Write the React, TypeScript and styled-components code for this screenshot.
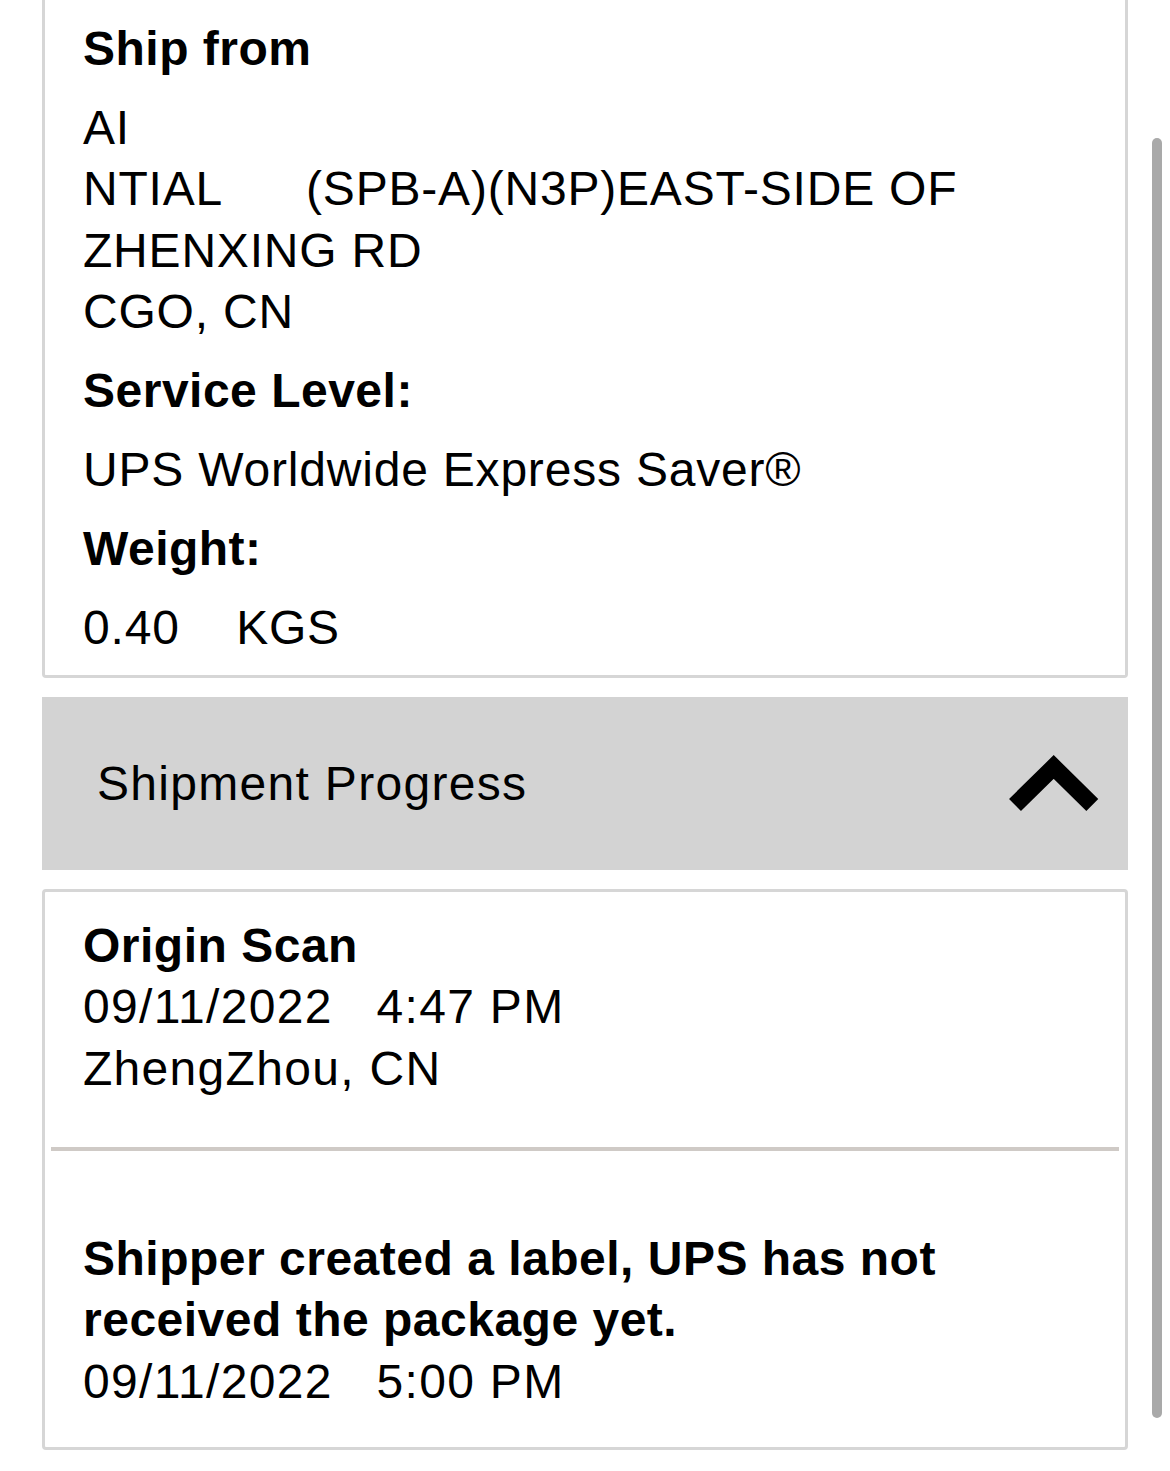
import styled, { createGlobalStyle } from "styled-components";

const GlobalStyle = createGlobalStyle`
  html, body {
    margin: 0;
    padding: 0;
    background: #ffffff;
    height: 1471px;
    overflow: hidden;
  }
  body {
    font-family: "Liberation Sans", Arial, Helvetica, sans-serif;
    color: #000;
  }
`;

const Page = styled.div`
  position: relative;
  width: 1086px;
  padding: 0 42px 21px 42px;
`;

const Card = styled.section<{ $open?: boolean }>`
  border: 3px solid #d6d6d6;
  border-top: ${(p) => (p.$open ? "none" : "3px solid #d6d6d6")};
  border-radius: ${(p) => (p.$open ? "0 0 4px 4px" : "4px")};
  background: #fff;
`;

const Details = styled.div`
  display: flex;
  flex-direction: column;
  gap: 17.5px;
  padding: 17.6px 38px 16.5px 38px;
`;

const Label = styled.div`
  font-size: 48px;
  font-weight: 700;
  line-height: 61.5px;
  letter-spacing: 0.5px;
`;

const Value = styled.div`
  font-size: 48px;
  font-weight: 400;
  line-height: 61.5px;
  letter-spacing: 0.8px;
  white-space: pre;
`;

const SectionHeader = styled.button`
  display: flex;
  align-items: center;
  justify-content: space-between;
  width: 100%;
  height: 173px;
  margin-top: 19px;
  padding: 0 26px 0 55px;
  border: none;
  background: #d3d3d3;
  font-family: inherit;
  font-size: 48px;
  letter-spacing: 1.3px;
  color: #000;
  cursor: pointer;
  box-sizing: border-box;
`;

const ProgressCard = styled(Card)`
  margin-top: 19px;
`;

const Event = styled.div<{ $first?: boolean }>`
  margin: 0 6px;
  padding: ${(p) => (p.$first ? "22.6px 30px 48px 32px" : "76.6px 30px 35px 32px")};
  border-bottom: ${(p) => (p.$first ? "4px solid #cfcac6" : "none")};
`;

const EventTitle = styled(Label)``;

const EventLine = styled(Value)`
  letter-spacing: 1.3px;
`;

const ScrollThumb = styled.div`
  position: absolute;
  top: 138px;
  left: 1152px;
  width: 10px;
  height: 1280px;
  border-radius: 5px;
  background: #a9a9a9;
`;

function ChevronUp() {
  return (
    <svg width="96" height="60" viewBox="0 0 96 60" aria-hidden="true">
      <polyline
        points="9,51 47.7,13 86.3,51"
        fill="none"
        stroke="#000"
        strokeWidth="17"
        strokeLinecap="butt"
        strokeLinejoin="miter"
      />
    </svg>
  );
}

export default function App() {
  return (
    <>
      <GlobalStyle />
      <Page>
        <Card $open>
          <Details>
            <Label>Ship from</Label>
            <Value>
              {"AI\nNTIAL      (SPB-A)(N3P)EAST-SIDE OF\nZHENXING RD\nCGO, CN"}
            </Value>
            <Label>Service Level:</Label>
            <Value>UPS Worldwide Express Saver®</Value>
            <Label>Weight:</Label>
            <Value>{"0.40    KGS"}</Value>
          </Details>
        </Card>

        <SectionHeader>
          <span>Shipment Progress</span>
          <ChevronUp />
        </SectionHeader>

        <ProgressCard>
          <Event $first>
            <EventTitle>Origin Scan</EventTitle>
            <EventLine>{"09/11/2022   4:47 PM"}</EventLine>
            <EventLine>ZhengZhou, CN</EventLine>
          </Event>
          <Event>
            <EventTitle>
              Shipper created a label, UPS has not received the package yet.
            </EventTitle>
            <EventLine>{"09/11/2022   5:00 PM"}</EventLine>
          </Event>
        </ProgressCard>
        <ScrollThumb />
      </Page>
    </>
  );
}
